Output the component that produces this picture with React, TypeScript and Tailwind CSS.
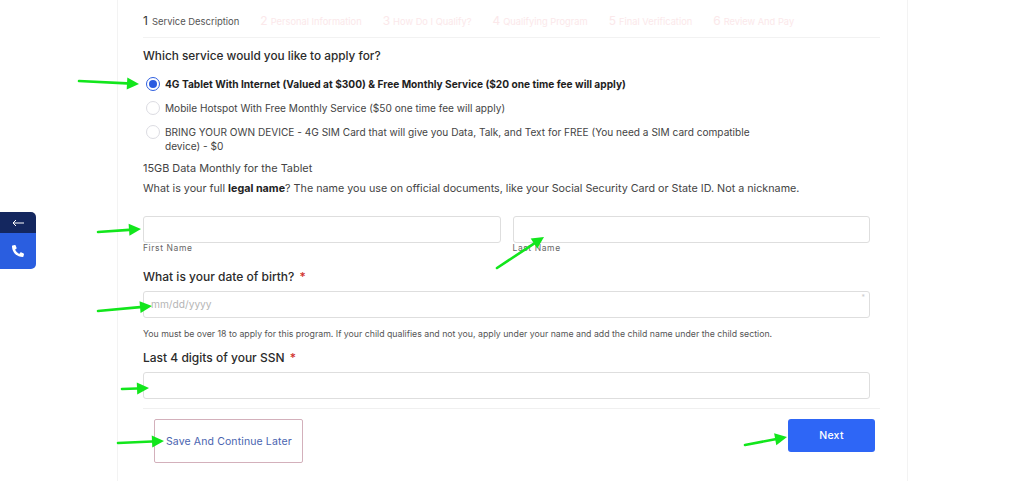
import { FaPhoneAlt } from 'react-icons/fa'

const steps = [
  ['2', 'Personal Information'],
  ['3', 'How Do I Qualify?'],
  ['4', 'Qualifying Program'],
  ['5', 'Final Verification'],
  ['6', 'Review And Pay'],
]

// green annotation arrows drawn over the form: [x1, y1, x2, y2]
const arrows = [
  [79, 81, 139, 84],
  [98, 232, 141, 229],
  [497, 268, 544, 237],
  [98, 311, 152, 306],
  [122, 389, 149, 388],
  [118, 443, 164, 441],
  [745, 445, 787, 437],
]

function Arrows() {
  return (
    <svg className="absolute left-0 top-0 pointer-events-none" width="1024" height="481">
      {arrows.map(([x1, y1, x2, y2], i) => {
        const len = Math.hypot(x2 - x1, y2 - y1)
        const ux = (x2 - x1) / len
        const uy = (y2 - y1) / len
        const bx = x2 - ux * 12
        const by = y2 - uy * 12
        return (
          <g key={i} fill="#12e61c" stroke="#12e61c">
            <line x1={x1} y1={y1} x2={bx} y2={by} strokeWidth="2.6" strokeLinecap="round" />
            <polygon
              stroke="none"
              points={`${x2},${y2} ${bx - uy * 6},${by + ux * 6} ${bx + uy * 6},${by - ux * 6}`}
            />
          </g>
        )
      })}
    </svg>
  )
}

function Radio({ checked }: { checked?: boolean }) {
  return (
    <span className={`w-[14px] h-[14px] rounded-full border flex-none flex items-center justify-center ${checked ? 'border-[#2f5fe0]' : 'border-[#dcdce2]'}`}>
      {checked && <span className="w-[8px] h-[8px] rounded-full bg-[#2a5be0]" />}
    </span>
  )
}

function Field({ className = '', children }: { className?: string; children?: React.ReactNode }) {
  return (
    <div className={`border border-[#dedede] rounded-[3px] bg-white flex items-center ${className}`}>
      {children}
    </div>
  )
}

function Label({ text, className = '' }: { text: string; className?: string }) {
  return (
    <div className={`text-[12px] leading-[16px] font-medium text-[#2b2b2b] ${className}`}>
      {text} <span className="text-[#d0312d] ml-0.5">*</span>
    </div>
  )
}

export default function App() {
  return (
    <div className="relative w-[1024px] h-[481px] bg-white overflow-hidden font-['Inter',sans-serif]">
      <div className="absolute left-0 top-[212px] w-[36px] h-[57px] rounded-r-[5px] overflow-hidden flex flex-col">
        <div className="h-[21px] bg-[#14275f] flex items-center justify-center">
          <svg width="12" height="8" viewBox="0 0 12 8" fill="none" stroke="white" strokeWidth="1">
            <path d="M1 4H12M4 1L1 4L4 7" />
          </svg>
        </div>
        <div className="flex-1 bg-[#2a5ee0] flex items-center justify-center">
          <FaPhoneAlt size={12} color="white" />
        </div>
      </div>

      <div className="ml-[117px] w-[791px] h-[481px] border-x border-[#f3f3f3] pl-[25px] pr-[27px]">
        <div className="h-[38px] border-b border-[#f2f2f2] flex items-center gap-[21px] pt-[4px] text-[9.3px]">
          <span className="text-[#555] whitespace-nowrap text-[9.45px]">
            <span className="text-[12px] text-[#333] mr-[4px]">1</span>Service Description
          </span>
          {steps.map(([n, t]) => (
            <span key={n} className="text-[#fbe8ea] whitespace-nowrap">
              <span className="text-[12px] mr-[3px]">{n}</span>{t}
            </span>
          ))}
        </div>

        <div className="mt-[10px] text-[11.8px] leading-[16px] font-medium text-[#2b2b2b]">
          Which service would you like to apply for?
        </div>

        <div className="mt-[12px] flex flex-col gap-[8px] text-[10.1px] text-[#444]">
          <div className="flex gap-[5px] h-[16px] items-center pl-[3px] leading-[16px]">
            <Radio checked />
            <span className="text-[10.17px] font-bold text-[#1e1e1e] whitespace-nowrap">4G Tablet With Internet (Valued at $300) &amp; Free Monthly Service ($20 one time fee will apply)</span>
          </div>
          <div className="flex gap-[5px] h-[16px] items-center pl-[3px] leading-[16px]">
            <Radio />
            <span className="whitespace-nowrap">Mobile Hotspot With Free Monthly Service ($50 one time fee will apply)</span>
          </div>
          <div className="flex gap-[5px] items-start pl-[3px] leading-[14px] mt-[1px]">
            <Radio />
            <span className="w-[590px]">BRING YOUR OWN DEVICE - 4G SIM Card that will give you Data, Talk, and Text for FREE (You need a SIM card compatible device) - $0</span>
          </div>
        </div>

        <div className="mt-[7px] text-[10.9px] leading-[16px] text-[#444]">15GB Data Monthly for the Tablet</div>
        <div className="mt-[5px] text-[10.75px] leading-[16px] text-[#444] whitespace-nowrap">
          What is your full <span className="font-bold text-[#222]">legal name</span>? The name you use on official documents, like your Social Security Card or State ID. Not a nickname.
        </div>

        <div className="mt-[19px] w-[727px] grid grid-cols-2 gap-[12px]">
          <div>
            <Field className="h-[27px]" />
            <div className="text-[8.5px] leading-[11px] tracking-[0.6px] text-[#666]">First Name</div>
          </div>
          <div>
            <Field className="h-[27px]" />
            <div className="text-[8.5px] leading-[11px] tracking-[0.6px] text-[#666]">Last Name</div>
          </div>
        </div>

        <Label text="What is your date of birth?" className="mt-[15px]" />
        <Field className="mt-[6px] w-[727px] h-[27px] pl-[7px] relative">
          <span className="text-[10.2px] text-[#b5b5b5]">mm/dd/yyyy</span>
          <span className="absolute right-[4px] top-[1px] text-[7px] text-[#ccc]">*</span>
        </Field>
        <div className="mt-[9px] text-[8.76px] leading-[14px] text-[#555] whitespace-nowrap">
          You must be over 18 to apply for this program. If your child qualifies and not you, apply under your name and add the child name under the child section.
        </div>

        <Label text="Last 4 digits of your SSN" className="mt-[9px]" />
        <Field className="mt-[6px] w-[727px] h-[27px]" />

        <div className="mt-[9px] w-[737px] border-t border-[#f0f0f0]" />

        <div className="mt-[10px] w-[732px] pl-[11px] flex justify-between items-start">
          <div className="w-[149px] h-[44px] border border-[#d3b0bb] rounded-[2px] flex items-center pl-[11px] pt-[1px] text-[10.5px] tracking-[0.12px] text-[#4a64b0] whitespace-nowrap">
            Save And Continue Later
          </div>
          <div className="w-[87px] h-[33px] rounded-[3px] bg-[#2e66f6] flex items-center justify-center text-[10.5px] font-medium tracking-[0.3px] text-white">
            Next
          </div>
        </div>
      </div>

      <Arrows />
    </div>
  )
}
